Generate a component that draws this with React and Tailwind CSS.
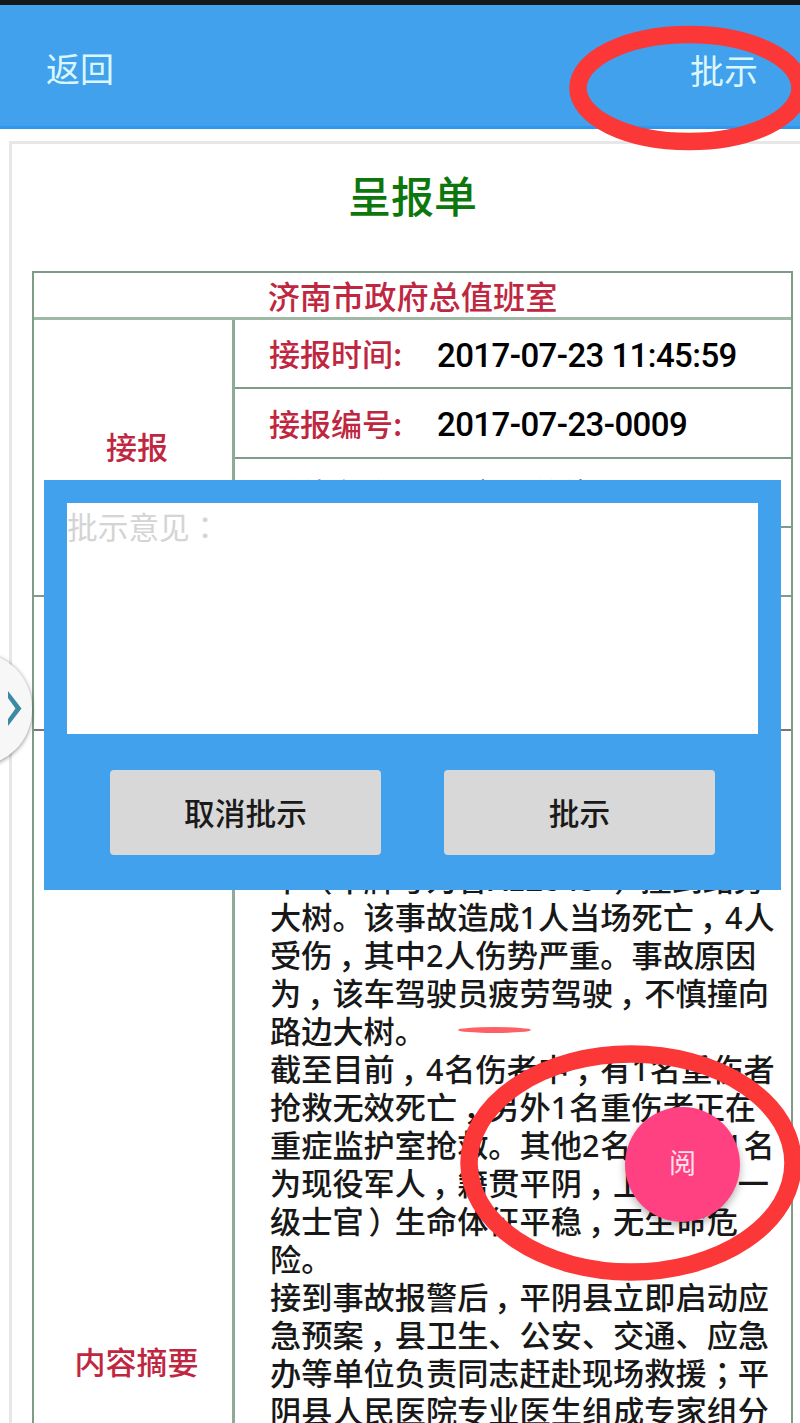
const C = () => <span className="inline-block h-[20px] w-[31.2px] pl-[6px] align-[-1px] leading-[20px]">，</span>;
const T = ({ children }) => <span className="font-['Noto_Sans_CJK_TC',sans-serif]">{children}</span>;
const Close = () => <span className="inline-block w-[31.2px] pl-[5px] tracking-[-5px]">）</span>;
const D = ({ children }) => <span className="font-['Noto_Sans','Noto_Sans_CJK_SC',sans-serif] text-[30.5px] tracking-[0.9px]">{children}</span>;
const Line = ({ children }) => <div className="h-[38px] whitespace-nowrap">{children}</div>;

function InfoRow({ label, value, className }) {
  return (
    <div className={`flex items-center border-b-[2px] border-[#7f9c88] pl-[34px] ${className}`}>
      <span className="w-[168px] text-[#bf2741]">{label}</span>
      <span className="pt-[4px] font-['Roboto','Noto_Sans_CJK_SC',sans-serif] text-[33px] tracking-[-0.57px] text-black">{value}</span>
    </div>
  );
}

function Document() {
  return (
    <section className="ml-[9px] mt-[12px] h-[1290px] border-l-[3px] border-t-[3px] border-[#e7e7e7] bg-white">
      <h1 className="mt-[19px] h-[68px] pl-[13px] text-center text-[43px] font-medium leading-[62px] text-[#0d760d]">呈报单</h1>
      <div className="ml-[20px] mt-[40px] flex h-[1300px] w-[761px] flex-col border-2 border-[#7f9c88] text-[31px] font-medium text-[#bf2741]">
        <div className="h-[47px] shrink-0 border-b-[3px] border-[#a0b9a7] text-center text-[32.2px] leading-[45px]">济南市政府总值班室</div>
        <div className="flex h-[277px] shrink-0 border-b-2 border-[#7f9c88]">
          <div className="flex w-[201px] items-center justify-center border-r-[3px] border-[#8fab97] pb-[22px] pl-[8px]">接报</div>
          <div className="flex-1">
            <InfoRow label="接报时间:" value="2017-07-23 11:45:59" className="h-[69px]" />
            <InfoRow label="接报编号:" value="2017-07-23-0009" className="h-[70px]" />
            <div className="flex h-[69px] items-center border-b-[2px] border-[#7f9c88] pl-[34px] pt-[2px]">
              <span className="w-[168px]">单位名称:</span>
              <span className="text-black">县市区单位</span>
            </div>
          </div>
        </div>
        <div className="h-[134px] shrink-0 border-b-2 border-[#777]" />
        <div className="flex flex-1">
          <div className="w-[201px] border-r-[3px] border-[#8fab97] pt-[607px] pl-[7px] text-center leading-[46px]">内容摘要</div>
          <div className="pl-[35px] pt-[128px] text-[31.2px] leading-[38px] text-[#181818]">
            <Line>车（车牌号为鲁<span className="inline-block w-[121px]">A12345</span><Close />撞到路旁</Line>
            <Line>大树。该事故造成<D>1</D>人当场死亡<C /><D>4</D>人</Line>
            <Line>受伤<C />其中<D>2</D>人伤势严重。事故原因</Line>
            <Line>为<C />该车驾驶员疲劳驾驶<C />不慎撞向</Line>
            <Line>路边大树。</Line>
            <Line>截至目前<C /><D>4</D>名伤者中<C />有<D>1</D>名重伤者</Line>
            <Line>抢救无效死亡<C />另外<D>1</D>名重伤者正在</Line>
            <Line>重症监护室抢救。其他<D>2</D>名伤者<C /><D>1</D>名</Line>
            <Line>为现役军人<C />籍贯平阴<C />上士军<C />一</Line>
            <Line>级士官<Close />生命体征平稳<C />无生命危</Line>
            <Line>险。</Line>
            <Line>接到事故报警后<C />平阴县立即启动应</Line>
            <Line>急预案<C />县卫生、公安、交通、应急</Line>
            <Line>办等单位负责同志赶赴现场救援<T>；</T>平</Line>
            <Line>阴县人民医院专业医生组成专家组分</Line>
          </div>
        </div>
      </div>
    </section>
  );
}

function CommentDialog() {
  return (
    <div className="absolute left-[44px] top-[480px] flex h-[410px] w-[737px] flex-col bg-[#41a1ec] px-[23px] pt-[23px]">
      <div className="h-[231px] bg-white text-[30.7px] leading-[45px] text-[#d4d4d4]">批示意见<T>：</T></div>
      <div className="mt-[36px] flex gap-[63px] pl-[43px] text-[30.7px] font-medium text-[#1a1a1a]">
        <button className="h-[85px] w-[271px] rounded-[4px] bg-[#d8d8d8]">取消批示</button>
        <button className="h-[85px] w-[271px] rounded-[4px] bg-[#d8d8d8]">批示</button>
      </div>
    </div>
  );
}

export default function App() {
  return (
    <main className="relative h-[1423px] w-[800px] overflow-hidden bg-white font-['Noto_Sans_CJK_SC',sans-serif]">
      <div className="h-[5px] bg-[#15181a]" />
      <header className="flex h-[124px] justify-between border-b-[3px] border-[#2f98ee] bg-[#41a1ec] pl-[46px] pr-[42px] text-[34px] leading-[50px] text-[#d9f7fd]">
        <span className="mt-[38px]">返回</span>
        <span className="mt-[40px]">批示</span>
      </header>
      <Document />
      <div className="absolute -left-[80px] top-[652px] h-[114px] w-[112px] rounded-full bg-[#f7f7f7] shadow-[0_1px_4px_rgba(0,0,0,0.45)]" />
      <svg className="absolute left-[6px] top-[690px]" width="18" height="38" viewBox="0 0 18 38" fill="#3c8aa3">
        <path d="M2 1 L15.500 18.500 L2 36 L2 29 L9.500 18.500 L2 8 Z" />
      </svg>
      <CommentDialog />
      <div className="absolute left-[625px] top-[1107px] flex h-[115px] w-[115px] items-center justify-center rounded-full bg-[#ff4081] pb-[5px] text-[27px] text-[#ffe0ec] shadow-[0_4px_9px_rgba(0,0,0,0.3)]">阅</div>
      <svg className="absolute left-0 top-0" width="800" height="1423" fill="none" stroke="#fc3737">
        <ellipse cx="689" cy="88" rx="111" ry="53.5" strokeWidth="17.5" />
        <ellipse cx="631" cy="1163" rx="162" ry="109" strokeWidth="17.5" />
        <ellipse cx="494.500" cy="1030" rx="36.500" ry="3" fill="#ff6066" stroke="none" />
      </svg>
    </main>
  );
}
